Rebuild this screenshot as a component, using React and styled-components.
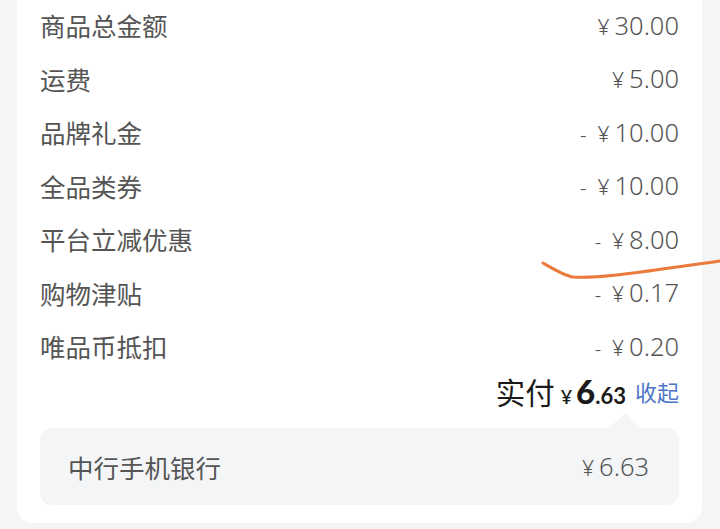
import React from "react";
import styled, { createGlobalStyle } from "styled-components";

const Global = createGlobalStyle`
  html, body { margin: 0; padding: 0; background: #f5f5f5; }
  body { font-family: "Noto Sans CJK SC", "Noto Sans", sans-serif; overflow: hidden; }
`;

const Page = styled.div`
  position: relative;
  width: 720px;
  height: 529px;
  overflow: hidden;
  padding: 0 18px 0 17px;
  box-sizing: border-box;
`;

const Card = styled.div`
  background: #fff;
  border-radius: 0 0 16px 16px;
  margin-top: -2px;
  padding: 0 23px 18px 23px;
`;

const Row = styled.div`
  height: 53.5px;
  display: flex;
  align-items: center;
  justify-content: space-between;
`;

const Label = styled.span`
  font-size: 25.5px;
  color: #555;
`;

const Amount = styled.span`
  display: flex;
  align-items: baseline;
  color: #555;
  font-family: "Noto Sans", "Lato", sans-serif;
`;

const Minus = styled.span`
  font-size: 20px;
  font-weight: 300;
  margin-right: 11px;
`;

const Yen = styled.span`
  font-size: 21px;
  font-weight: 300;
  margin-right: 5px;
`;

const Num = styled.span`
  font-size: 25.5px;
  font-weight: 300;
`;

const TotalRow = styled.div`
  height: 37px;
  display: flex;
  align-items: center;
  justify-content: flex-end;
  gap: 9px;
`;

const TotalGroup = styled.span`
  display: flex;
  align-items: baseline;
  color: #1a1a1a;
`;

const TotalLabel = styled.span`
  font-size: 29.5px;
  font-weight: 400;
  margin-right: 6px;
`;

const TotalYen = styled.span`
  font-family: "Noto Sans", sans-serif;
  font-size: 20px;
  font-weight: 500;
  margin-right: 4px;
`;

const TotalInt = styled.span`
  font-family: "Lato", sans-serif;
  font-size: 33px;
  font-weight: 900;
`;

const TotalDec = styled.span`
  font-family: "Lato", sans-serif;
  font-size: 22px;
  font-weight: 700;
`;

const Toggle = styled.span`
  font-size: 22px;
  color: #4c75c6;
`;

const PayWrap = styled.div`
  position: relative;
  margin-top: 18px;
`;

const Pointer = styled.div`
  position: absolute;
  top: -15px;
  right: 38px;
  width: 0;
  height: 0;
  border-left: 16px solid transparent;
  border-right: 16px solid transparent;
  border-bottom: 15px solid #f4f5f7;
`;

const PayBox = styled.div`
  height: 77px;
  background: #f4f5f7;
  border-radius: 12px;
  display: flex;
  align-items: center;
  justify-content: space-between;
  padding: 0 30px 0 28px;
`;

const Mark = styled.svg`
  position: absolute;
  left: 0;
  top: 0;
  pointer-events: none;
`;

const rows = [
  { label: "商品总金额", value: "30.00" },
  { label: "运费", value: "5.00" },
  { label: "品牌礼金", value: "10.00", minus: true },
  { label: "全品类券", value: "10.00", minus: true },
  { label: "平台立减优惠", value: "8.00", minus: true },
  { label: "购物津贴", value: "0.17", minus: true },
  { label: "唯品币抵扣", value: "0.20", minus: true },
];

export default function App() {
  return (
    <Page>
      <Global />
      <Card>
        {rows.map((r) => (
          <Row key={r.label}>
            <Label>{r.label}</Label>
            <Amount>
              {r.minus && <Minus>-</Minus>}
              <Yen>¥</Yen>
              <Num>{r.value}</Num>
            </Amount>
          </Row>
        ))}
        <TotalRow>
          <TotalGroup>
            <TotalLabel>实付</TotalLabel>
            <TotalYen>¥</TotalYen>
            <TotalInt>6</TotalInt>
            <TotalDec>.63</TotalDec>
          </TotalGroup>
          <Toggle>收起</Toggle>
        </TotalRow>
        <PayWrap>
          <Pointer />
          <PayBox>
            <Label>中行手机银行</Label>
            <Amount>
              <Yen>¥</Yen>
              <Num>6.63</Num>
            </Amount>
          </PayBox>
        </PayWrap>
      </Card>
      <Mark width="720" height="529" viewBox="0 0 720 529">
        <path
          d="M543 263 C555 270 565 276 573 277 C600 279 640 272 720 261"
          fill="none"
          stroke="#ec7a3c"
          strokeWidth="3"
          strokeLinecap="round"
        />
      </Mark>
    </Page>
  );
}
